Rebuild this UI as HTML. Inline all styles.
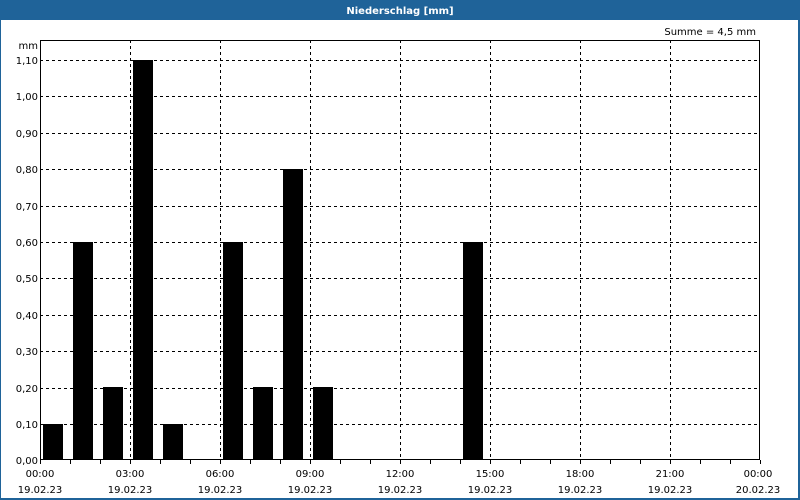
<!DOCTYPE html>
<html><head><style>
html,body{margin:0;padding:0;background:#fff;}
body{width:800px;height:500px;overflow:hidden;position:relative;}
svg{display:block;font-family:"DejaVu Sans","Liberation Sans",sans-serif;}
</style></head><body>
<svg width="800" height="500" xmlns="http://www.w3.org/2000/svg">
<rect x="0" y="0" width="800" height="500" fill="#1f6399"/>
<rect x="1" y="20" width="797" height="478" fill="#fff"/>
<text x="400" y="14" fill="#fff" font-size="10" font-weight="bold" text-anchor="middle">Niederschlag [mm]</text>
<text x="756" y="35" font-size="10" text-anchor="end" fill="#000">Summe = 4,5 mm</text>
<text x="38" y="49" font-size="10" text-anchor="end" fill="#000">mm</text>
<g stroke="#000" stroke-width="1" stroke-dasharray="3,3" shape-rendering="crispEdges">
<line x1="40" y1="424.5" x2="760" y2="424.5"/><line x1="40" y1="388.5" x2="760" y2="388.5"/>
<line x1="40" y1="351.5" x2="760" y2="351.5"/><line x1="40" y1="315.5" x2="760" y2="315.5"/>
<line x1="40" y1="278.5" x2="760" y2="278.5"/><line x1="40" y1="242.5" x2="760" y2="242.5"/>
<line x1="40" y1="206.5" x2="760" y2="206.5"/><line x1="40" y1="169.5" x2="760" y2="169.5"/>
<line x1="40" y1="133.5" x2="760" y2="133.5"/><line x1="40" y1="96.5" x2="760" y2="96.5"/>
<line x1="40" y1="60.5" x2="760" y2="60.5"/>
<line x1="130.5" y1="40" x2="130.5" y2="460"/><line x1="220.5" y1="40" x2="220.5" y2="460"/>
<line x1="310.5" y1="40" x2="310.5" y2="460"/><line x1="400.5" y1="40" x2="400.5" y2="460"/>
<line x1="490.5" y1="40" x2="490.5" y2="460"/><line x1="580.5" y1="40" x2="580.5" y2="460"/>
<line x1="670.5" y1="40" x2="670.5" y2="460"/>
</g>
<g fill="#000" shape-rendering="crispEdges">
<rect x="43" y="424" width="20" height="36"/>
<rect x="73" y="242" width="20" height="218"/>
<rect x="103" y="387" width="20" height="73"/>
<rect x="133" y="60" width="20" height="400"/>
<rect x="163" y="424" width="20" height="36"/>
<rect x="223" y="242" width="20" height="218"/>
<rect x="253" y="387" width="20" height="73"/>
<rect x="283" y="169" width="20" height="291"/>
<rect x="313" y="387" width="20" height="73"/>
<rect x="463" y="242" width="20" height="218"/>
</g>
<rect x="40.5" y="40.5" width="719" height="419" fill="none" stroke="#000" stroke-width="1" shape-rendering="crispEdges"/>
<path stroke="#000" shape-rendering="crispEdges" d="M40.5 460v4M70.5 460v4M100.5 460v4M130.5 460v4M160.5 460v4M190.5 460v4M220.5 460v4M250.5 460v4M280.5 460v4M310.5 460v4M340.5 460v4M370.5 460v4M400.5 460v4M430.5 460v4M460.5 460v4M490.5 460v4M520.5 460v4M550.5 460v4M580.5 460v4M610.5 460v4M640.5 460v4M670.5 460v4M700.5 460v4M730.5 460v4M760.5 460v4"/>
<g font-size="10" text-anchor="end" fill="#000">
<text x="38" y="464">0,00</text><text x="38" y="428">0,10</text><text x="38" y="392">0,20</text>
<text x="38" y="355">0,30</text><text x="38" y="319">0,40</text><text x="38" y="282">0,50</text>
<text x="38" y="246">0,60</text><text x="38" y="210">0,70</text><text x="38" y="173">0,80</text>
<text x="38" y="137">0,90</text><text x="38" y="100">1,00</text><text x="38" y="64">1,10</text>
</g>
<g font-size="10" text-anchor="middle" fill="#000">
<text x="40" y="477">00:00</text><text x="40" y="493">19.02.23</text>
<text x="130" y="477">03:00</text><text x="130" y="493">19.02.23</text>
<text x="220" y="477">06:00</text><text x="220" y="493">19.02.23</text>
<text x="310" y="477">09:00</text><text x="310" y="493">19.02.23</text>
<text x="400" y="477">12:00</text><text x="400" y="493">19.02.23</text>
<text x="490" y="477">15:00</text><text x="490" y="493">19.02.23</text>
<text x="580" y="477">18:00</text><text x="580" y="493">19.02.23</text>
<text x="670" y="477">21:00</text><text x="670" y="493">19.02.23</text>
<text x="758" y="477">00:00</text><text x="758" y="493">20.02.23</text>
</g>
</svg>
</body></html>
